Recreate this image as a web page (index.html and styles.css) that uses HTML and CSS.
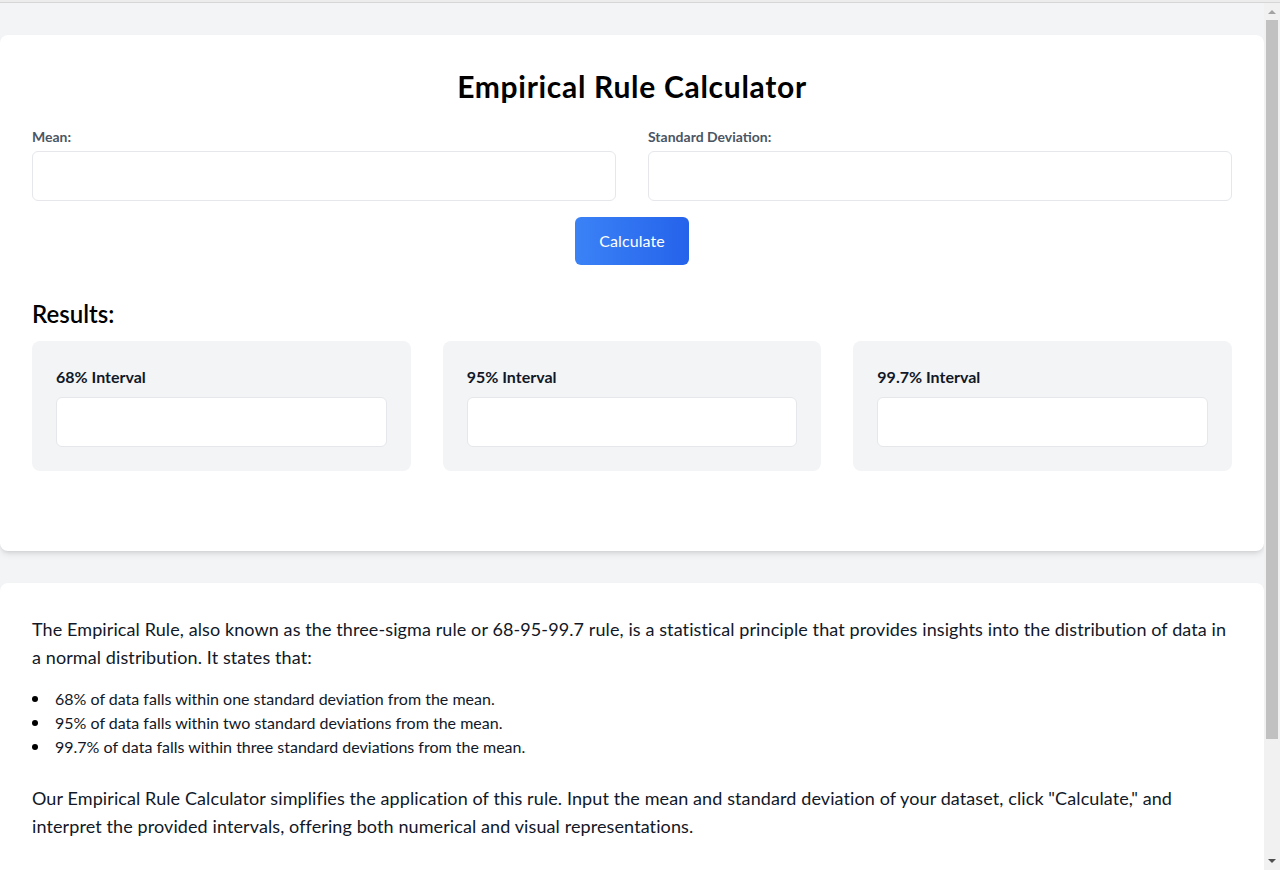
FILE: index.html
```html
<!DOCTYPE html>
<html lang="en">
<head>
<meta charset="utf-8">
<title>Empirical Rule Calculator</title>
<link rel="stylesheet" href="styles.css">
</head>
<body>
<div class="topline"></div>
<div class="app">
  <div class="scroller">
    <main class="page">
      <section class="card calc">
        <h1 class="title">Empirical Rule Calculator</h1>
        <div class="fields">
          <div class="field">
            <label class="label" for="mean">Mean:</label>
            <input class="input" id="mean" type="text">
          </div>
          <div class="field">
            <label class="label" for="sd">Standard Deviation:</label>
            <input class="input" id="sd" type="text">
          </div>
        </div>
        <div class="actions">
          <button class="btn" type="button">Calculate</button>
        </div>
        <h2 class="results-title">Results:</h2>
        <div class="results">
          <div class="result">
            <h3 class="result-label">68% Interval</h3>
            <div class="result-out"></div>
          </div>
          <div class="result">
            <h3 class="result-label">95% Interval</h3>
            <div class="result-out"></div>
          </div>
          <div class="result">
            <h3 class="result-label">99.7% Interval</h3>
            <div class="result-out"></div>
          </div>
        </div>
      </section>
      <section class="card info">
        <p class="text">The Empirical Rule, also known as the three-sigma rule or 68-95-99.7 rule, is a statistical principle that provides insights into the distribution of data in a normal distribution. It states that:</p>
        <ul class="list">
          <li>68% of data falls within one standard deviation from the mean.</li>
          <li>95% of data falls within two standard deviations from the mean.</li>
          <li>99.7% of data falls within three standard deviations from the mean.</li>
        </ul>
        <p class="text">Our Empirical Rule Calculator simplifies the application of this rule. Input the mean and standard deviation of your dataset, click "Calculate," and interpret the provided intervals, offering both numerical and visual representations.</p>
      </section>
    </main>
  </div>
  <div class="scrollbar" aria-hidden="true">
    <div class="sb-btn"><span class="sb-up"></span></div>
    <div class="sb-track"><div class="sb-thumb"></div></div>
    <div class="sb-btn sb-btn-down"><span class="sb-down"></span></div>
  </div>
</div>
</body>
</html>
```
FILE: styles.css
```css
* { box-sizing: border-box; }
html, body { margin: 0; padding: 0; height: 100%; overflow: hidden; }
body {
  background: #f3f4f6;
  font-family: "Lato", "Noto Sans", "Liberation Sans", sans-serif;
  color: #111827;
}
.topline {
  height: 3px;
  background: #ececec;
  border-bottom: 1px solid #d6d6d6;
}
.app {
  display: flex;
  height: calc(100vh - 3px);
}
.scroller {
  flex: 1;
  min-width: 0;
  overflow: hidden;
}
.page {
  padding: 32px 0 32px;
}
.card {
  background: #ffffff;
  border-radius: 8px;
  box-shadow: 0 4px 6px -1px rgba(0,0,0,0.1), 0 2px 4px -2px rgba(0,0,0,0.1);
  padding: 32px;
}
.title {
  margin: 0 0 22px;
  padding-top: 1px;
  text-align: center;
  font-size: 30px;
  line-height: 37px;
  font-weight: 700;
  letter-spacing: 0.7px;
  color: #000;
}
.fields {
  display: grid;
  grid-template-columns: 1fr 1fr;
  gap: 32px;
}
.field { display: flex; flex-direction: column; }
.label {
  font-size: 14px;
  line-height: 20px;
  font-weight: 700;
  color: #4b5563;
  margin-bottom: 4px;
}
.input {
  height: 50px;
  border: 1px solid #e5e7eb;
  border-radius: 6px;
  padding: 12px 16px;
  font: inherit;
  font-size: 16px;
  background: #fff;
  outline: none;
}
.actions {
  display: flex;
  justify-content: center;
  margin-top: 16px;
}
.btn {
  height: 48px;
  padding: 0 24px;
  border: 0;
  border-radius: 6px;
  background: linear-gradient(to right, #3b82f6, #2563eb);
  color: #fff;
  font: inherit;
  font-size: 16px;
  line-height: 24px;
  letter-spacing: 0.1px;
  cursor: pointer;
}
.results-title {
  margin: 33px 0 11px;
  font-size: 24px;
  line-height: 32px;
  font-weight: 600;
  color: #000;
}
.results {
  display: grid;
  grid-template-columns: repeat(3, 1fr);
  gap: 32px;
  margin-bottom: 48px;
}
.result {
  background: #f3f4f6;
  border-radius: 8px;
  padding: 24px;
}
.result-label {
  margin: 0 0 8px;
  font-size: 16px;
  line-height: 24px;
  font-weight: 700;
  color: #111827;
}
.result-out {
  height: 50px;
  background: #fff;
  border: 1px solid #e5e7eb;
  border-radius: 6px;
}
.info {
  margin-top: 32px;
  padding-bottom: 139px;
}
.text {
  margin: 0;
  font-size: 18px;
  line-height: 28px;
  letter-spacing: 0.1px;
  color: #111827;
}
.list {
  margin: 16px 0 25px;
  padding: 0;
  list-style: none;
  font-size: 16px;
  line-height: 24px;
  color: #111827;
}
.list li {
  display: flex;
  align-items: flex-start;
}
.list li::before {
  content: "";
  flex: none;
  width: 6px;
  height: 6px;
  border-radius: 50%;
  background: #000;
  margin: 9px 17px 0 0;
}
.scrollbar {
  width: 16px;
  flex: none;
  display: flex;
  flex-direction: column;
  background: #f1f1f1;
}
.sb-btn {
  height: 14px;
  display: flex;
  align-items: center;
  justify-content: center;
  padding-top: 4px;
}
.sb-btn-down {
  height: 17px;
  padding-top: 0;
  padding-bottom: 2px;
}
.sb-up {
  width: 0;
  height: 0;
  border-left: 4px solid transparent;
  border-right: 4px solid transparent;
  border-bottom: 4px solid #a3a3a3;
}
.sb-down {
  width: 0;
  height: 0;
  border-left: 4px solid transparent;
  border-right: 4px solid transparent;
  border-top: 4px solid #505050;
}
.sb-track {
  flex: 1;
  padding: 3px 2px 0;
}
.sb-thumb {
  height: 719px;
  background: #c1c1c1;
}
```
